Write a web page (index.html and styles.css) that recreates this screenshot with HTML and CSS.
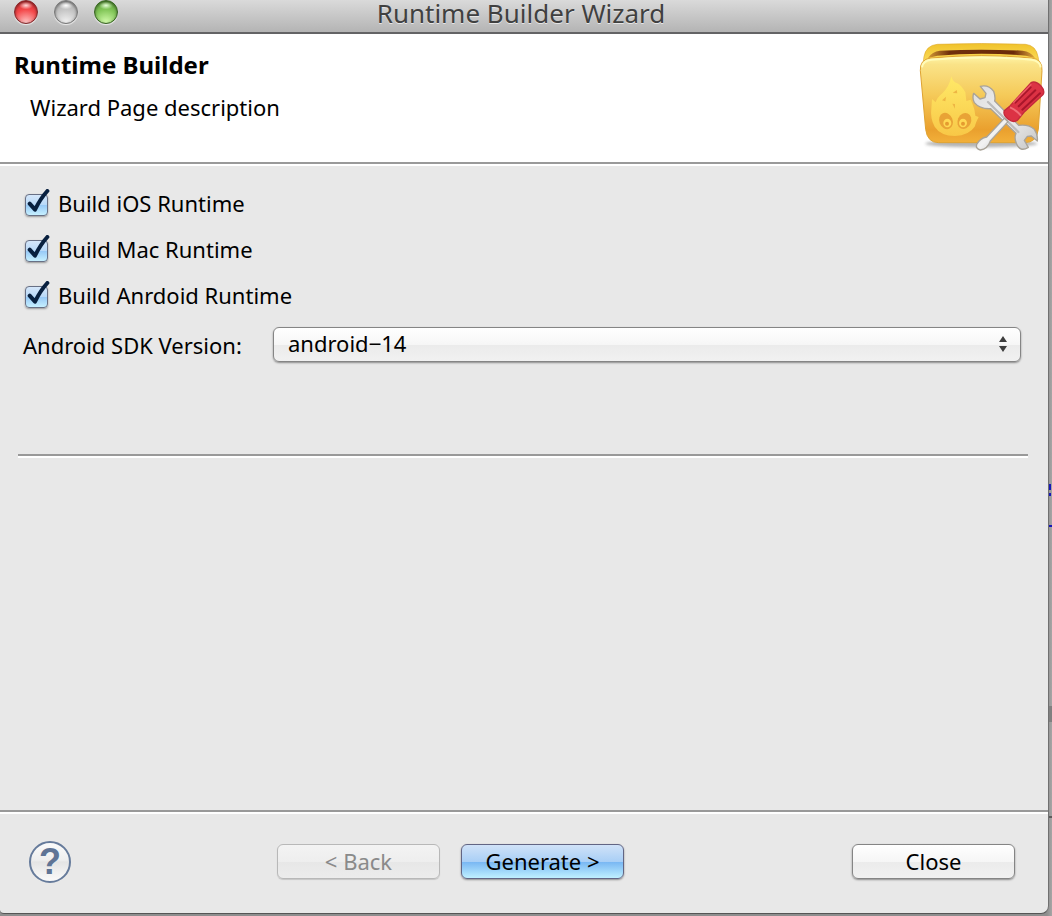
FILE: index.html
```html
<!DOCTYPE html>
<html lang="en">
<head>
<meta charset="utf-8">
<meta name="viewport" content="width=device-width, initial-scale=1">
<title>Runtime Builder Wizard</title>
<link rel="stylesheet" href="styles.css">
</head>
<body>
<svg width="0" height="0" class="defs" aria-hidden="true">
  <defs>
    <symbol id="tick" viewBox="0 0 78 84">
      <path d="M17 44 33 62Q49 29 70 6" fill="none" stroke="#08203f" stroke-width="12" stroke-linecap="round" stroke-linejoin="round"/>
    </symbol>
  </defs>
</svg>
<div class="desktop">
  <main class="window">
    <header class="titlebar">
      <div class="lights">
        <button class="light red" aria-label="Close window"></button>
        <button class="light gray" aria-label="Minimize window"></button>
        <button class="light green" aria-label="Zoom window"></button>
      </div>
      <div class="window-title">Runtime Builder Wizard</div>
    </header>

    <section class="banner">
      <div class="banner-text">
        <h1>Runtime Builder</h1>
        <p>Wizard Page description</p>
      </div>
      <svg class="banner-icon" viewBox="42 36 384 336" aria-hidden="true">
        <defs>
          <linearGradient id="front" x1="0" y1="0" x2="0" y2="1">
            <stop offset="0" stop-color="#fff6a8"/><stop offset=".1" stop-color="#fae388"/>
            <stop offset=".45" stop-color="#f5ca59"/><stop offset=".85" stop-color="#eaa02e"/><stop offset="1" stop-color="#f2b03a"/>
          </linearGradient>
          <linearGradient id="rim" x1="0" y1="0" x2="0" y2="1">
            <stop offset="0" stop-color="#f0c22b"/><stop offset="1" stop-color="#ffe468"/>
          </linearGradient>
          <linearGradient id="slot" x1="0" y1="0" x2="1" y2="0">
            <stop offset="0" stop-color="#d49a33"/><stop offset=".2" stop-color="#6f2f0c"/><stop offset=".8" stop-color="#6b2a0a"/><stop offset="1" stop-color="#e0a83a"/>
          </linearGradient>
          <linearGradient id="flame" x1="0" y1="0" x2="0" y2="1">
            <stop offset="0" stop-color="#ffe968"/><stop offset="1" stop-color="#f8c847"/>
          </linearGradient>
          <linearGradient id="steel" x1="0" y1="0" x2="1" y2="1">
            <stop offset="0" stop-color="#dcdcdc"/><stop offset=".5" stop-color="#f2f2f2"/><stop offset="1" stop-color="#c6c6c6"/>
          </linearGradient>
          <filter id="soft" x="-10%" y="-100%" width="120%" height="300%"><feGaussianBlur stdDeviation="5"/></filter>
        </defs>
        <ellipse cx="232" cy="341" rx="168" ry="11" fill="#777" opacity=".55" filter="url(#soft)"/>
        <path d="M56 112 60 80Q66 46 100 43Q232 38 364 43Q396 46 402 80L408 112Z" fill="url(#rim)" stroke="#dfaa2c" stroke-width="2"/>
        <path d="M72 84Q84 64 108 62Q232 56 356 62Q380 64 393 84L366 77Q232 66 100 77Z" fill="url(#slot)"/>
        <path d="M49 122Q47 88 80 84Q232 70 384 84Q416 88 414 122L403 298Q398 338 362 338H104Q70 338 65 298Z" fill="url(#front)" stroke="#dfa332" stroke-width="3"/>
        <path d="M54 112Q56 92 82 89Q232 76 382 89Q408 92 410 112" fill="none" stroke="#fffbb9" stroke-width="6"/>
        <path d="M142 139Q147 158 160 160Q172 166 184 187L187 213 200 209Q206 222 211 238L214 257 224 261Q214 280 213 289Q195 317 153 318Q109 317 92 290Q78 264 82 236L84 207 95 217Q100 202 115 190Q136 170 142 139Z" fill="url(#flame)"/>
        <g fill="#eeb644"><path d="M146 189 158 180 160 190ZM114 211 126 200 124 214ZM145 221 153 222 153 236Z"/></g>
        <ellipse cx="126" cy="273" rx="20" ry="25" transform="rotate(-22 126 273)" fill="#e9a336"/>
        <ellipse cx="181" cy="273" rx="20" ry="25" transform="rotate(24 181 273)" fill="#e9a336"/>
        <ellipse cx="130" cy="279" rx="12" ry="13" fill="#ffd854"/><circle cx="129" cy="281" r="6" fill="#e59b30"/>
        <ellipse cx="177" cy="279" rx="12" ry="13" fill="#ffd854"/><circle cx="177" cy="281" r="6" fill="#e59b30"/>
        <path d="M229 169Q254 163 269 184Q275 202 272 213L344 286Q374 282 391 298Q402 313 400 333L382 318 370 319 361 331 373 352Q348 368 337 340Q330 324 336 310L260 236Q228 238 211 218Q204 205 209 190L228 207 243 203 246 190Z" fill="url(#steel)" stroke="#a9a398" stroke-width="4" stroke-linejoin="round"/>
        <path d="M252 216 343 306" stroke="#bcbcbc" stroke-width="7" stroke-linecap="round"/>
        <path d="M301 265 312 275 259 333Q251 357 229 360Q214 356 218 343Q229 324 248 321Z" fill="url(#steel)" stroke="#a9a398" stroke-width="4" stroke-linejoin="round"/>
        <path d="M381 158Q394 151 411 168Q424 183 417 194L360 247 341 270Q329 280 312 267Q296 254 301 242L318 228Z" fill="#dc3244" stroke="#c32a3b" stroke-width="4"/>
        <path d="M318 232Q335 238 351 257" fill="none" stroke="#f16e78" stroke-width="6"/>
        <path d="M334 218 380 172M344 229 394 181M355 239 408 190" stroke="#a9162a" stroke-width="6" stroke-linecap="round"/>
        <path d="M328 218 382 163" stroke="#ef5965" stroke-width="4"/>
      </svg>
    </section>

    <section class="content">
      <div class="options">
        <label class="option"><span class="check"><input type="checkbox" checked><svg><use href="#tick"/></svg></span>Build iOS Runtime</label>
        <label class="option"><span class="check"><input type="checkbox" checked><svg><use href="#tick"/></svg></span>Build Mac Runtime</label>
        <label class="option"><span class="check"><input type="checkbox" checked><svg><use href="#tick"/></svg></span>Build Anrdoid Runtime</label>
      </div>
      <div class="sdk">
        <label for="sdk">Android SDK Version:</label>
        <div class="select">
          <select id="sdk"><option>android‒14</option></select>
          <svg viewBox="0 0 10 18" aria-hidden="true"><path d="M5 1 9 7H1ZM1 11H9L5 17Z" fill="#3d3d3d"/></svg>
        </div>
      </div>
      <hr>
    </section>

    <footer class="footer">
      <button class="help" aria-label="Help">?</button>
      <div class="nav">
        <button class="push" disabled>&lt; Back</button>
        <button class="push primary">Generate &gt;</button>
      </div>
      <button class="push">Close</button>
    </footer>
  </main>
  <svg class="behind" aria-hidden="true">
    <path d="M0 484h2v6h-2zM0 493h2v3h-2zM0 525h3v2h-3z" fill="#1717b8"/>
    <path d="M0 706h4v16h-4z" fill="#808080"/>
    <path d="M0 816h4v2h-4z" fill="#5c5c5c"/>
  </svg>
</div>
</body>
</html>
```
FILE: styles.css
```css
* { box-sizing: border-box; }

body {
  margin: 0;
  font-family: "Lucida Grande", "Noto Sans", "Open Sans", sans-serif;
  font-size: 22px;
  line-height: 30px;
  color: #000;
}

button, select { font: inherit; color: inherit; margin: 0; }
.defs { position: absolute; }

.desktop {
  display: flex;
  min-height: 100vh;
  background: linear-gradient(to left, #a6a6a6, #8e8e8e 5px);
  padding-bottom: 2px;
}

.behind { width: 3px; flex: none; align-self: stretch; height: auto; }

.window {
  flex: 1;
  display: flex;
  flex-direction: column;
  background: #e8e8e8;
  border-right: 1px solid #707070;
  border-bottom: 1px solid #555;
  border-radius: 0 0 8px 4px;
}

.titlebar {
  display: grid;
  grid-template-columns: 1fr auto 1fr;
  height: 34px;
  padding-right: 6px;
  background: linear-gradient(#dadada, #b4b4b4);
  border-bottom: 2px solid #636365;
}

.lights { display: flex; gap: 16px; padding-left: 14px; }

.light {
  width: 24px;
  height: 24px;
  padding: 0;
  border: 1px solid #777;
  border-radius: 50%;
  box-shadow: 0 1px 1px #eee, inset 0 1px 3px rgba(0, 0, 0, .5);
}

.red {
  border-color: #84272a;
  background: radial-gradient(ellipse 7px 4px at 50% 20%, #ffd9d9, transparent), radial-gradient(circle at 50% 100%, #ffc9c9, #f4484a 55%, #c92a2e);
}
.gray {
  background: radial-gradient(ellipse 7px 4px at 50% 20%, #fff, transparent), radial-gradient(circle at 50% 100%, #f4f4f4, #c5c5c5 55%, #a8a8a8);
}
.green {
  border-color: #35641f;
  background: radial-gradient(ellipse 7px 4px at 50% 20%, #e5ffd8, transparent), radial-gradient(circle at 50% 100%, #d7ffb0, #82c658 55%, #579a35);
}

.window-title {
  font-size: 26px;
  line-height: 26px;
  color: #404040;
  text-shadow: 0 1px 0 #e6e6e6;
  white-space: nowrap;
}

.banner {
  display: flex;
  justify-content: space-between;
  height: 130px;
  padding: 8px 2px 0 14px;
  background: #fff;
  border-bottom: 2px solid #999;
}
.banner-text { padding-top: 8px; }
h1 { margin: 0; font-size: 24px; line-height: 30px; font-weight: 700; }
.banner p { margin: 12px 0 0 16px; }
.banner-icon { width: 128px; height: 112px; }

.content {
  flex: 1;
  padding: 22px 20px 20px 18px;
  border-top: 2px solid #fff;
  border-bottom: 2px solid #999;
}

.options { display: grid; gap: 16px; justify-items: start; padding-left: 6px; }
.option { display: flex; align-items: center; gap: 8px; }
.check { position: relative; width: 26px; height: 28px; padding: 5px 1px 1px; display: flex; }
.check input {
  appearance: none;
  width: 23px;
  height: 22px;
  margin: 0;
  border: 1px solid #687085;
  border-radius: 4px;
  background: linear-gradient(#d5e7fa, #b9d9f8 48%, #96c8f6 50%, #c6f0ff);
  box-shadow: 0 1px 2px rgba(0, 0, 0, .35);
}
.check svg {
  position: absolute;
  left: 0;
  top: 0;
  width: 26px;
  height: 28px;
  pointer-events: none;
  visibility: hidden;
}
.check input:checked + svg { visibility: visible; }

.sdk {
  display: flex;
  align-items: center;
  padding: 17px 7px 0 5px;
}
.sdk label { min-width: 250px; }
.select { position: relative; flex: 1; }
.select svg {
  position: absolute;
  right: 13px;
  top: 8px;
  width: 10px;
  height: 18px;
  pointer-events: none;
}
select, .push {
  height: 35px;
  border: 1px solid #858585;
  border-radius: 6px;
  background: linear-gradient(#fff, #f6f6f6 50%, #ebebeb 51%, #f1f1f1);
  box-shadow: 0 1px 2px rgba(0, 0, 0, .4);
}
select {
  display: block;
  appearance: none;
  width: 100%;
  padding: 0 32px 3px 14px;
}

hr {
  height: 4px;
  margin: 92px 0 0;
  border: 0;
  border-top: 2px solid #999;
  background: #fff;
}

.footer {
  display: flex;
  align-items: center;
  height: 101px;
  padding: 0 33px 4px 29px;
  border-top: 2px solid #fff;
}

.help {
  width: 42px;
  height: 42px;
  padding: 0;
  border: 2px solid #667b9b;
  border-radius: 50%;
  background: linear-gradient(#fbfbfb, #eee 45%, #e4e4e4 50%, #fafafa);
  color: #5f7495;
  font: 700 36px/38px "Liberation Sans", sans-serif;
}

.nav { display: flex; gap: 21px; margin: 0 auto 0 206px; }
.push { width: 163px; padding: 0 0 2px; line-height: 30px; }
.push:disabled {
  color: #8a8a8a;
  border-color: #b8b8b8;
  background: linear-gradient(#f3f3f3, #eee 50%, #e7e7e7 51%, #ececec);
  box-shadow: 0 1px 1px rgba(0, 0, 0, .15);
}
.primary {
  border-color: #626584;
  background: linear-gradient(#d0e2f8, #a9cff6 50%, #79b7f3 52%, #bff0ff);
}
```
